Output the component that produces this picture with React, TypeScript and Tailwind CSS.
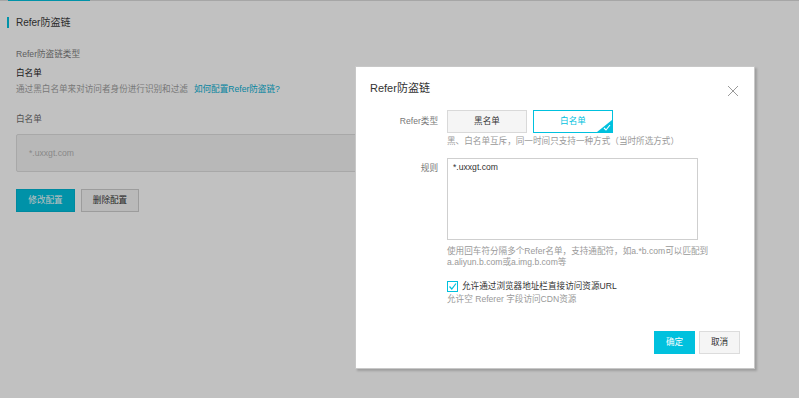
import React from "react";

const font = { fontFamily: '"Liberation Sans", "Noto Sans CJK SC", sans-serif' };

export default function App() {
  return (
    <div
      className="relative w-[799px] h-[398px] overflow-hidden bg-white"
      style={font}
    >
      {/* page */}
      <div className="h-px bg-[#dcdcdc]">
        <div className="ml-[8px] w-[82px] h-px bg-[#00c1de]" />
      </div>
      <div className="mt-[16px] flex items-center h-[11px]">
        <div className="ml-[7px] w-[2px] h-[11px] bg-[#00c1de]" />
        <span className="ml-[7px] text-[10px] leading-[11px] text-[#3a3a3a]">Refer防盗链</span>
      </div>
      <div className="pl-[16px]">
        <div className="mt-[20px] text-[8.6px] leading-[12px] text-[#7c7c7c]">Refer防盗链类型</div>
        <div className="mt-[7px] text-[8.6px] leading-[12px] text-[#222]">白名单</div>
        <div className="mt-[4px] text-[8.6px] leading-[12px] text-[#a0a0a0]">
          通过黑白名单来对访问者身份进行识别和过滤
          <span className="ml-[6px] text-[#09b0d4]">如何配置Refer防盗链?</span>
        </div>
        <div className="mt-[18px] text-[8.6px] leading-[12px] text-[#6a6a6a]">白名单</div>
        <div className="mt-[9px] w-[560px] h-[38px] rounded-[2px] border border-[#dedede] bg-[#f3f3f3] flex items-center pl-[12px] text-[8.6px] text-[#b5b5b5]">
          *.uxxgt.com
        </div>
        <div className="mt-[17px] flex gap-[6px]">
          <div className="w-[59px] h-[23px] bg-[#00c1de] text-white text-[8.6px] flex items-center justify-center border border-[#00b5d2]">
            修改配置
          </div>
          <div className="w-[58px] h-[23px] bg-[#f5f5f5] text-[#333] text-[8.6px] flex items-center justify-center border border-[#cfcfcf]">
            删除配置
          </div>
        </div>
      </div>

      {/* overlay */}
      <div className="absolute inset-0 bg-black/[0.243]" />

      {/* modal */}
      <div className="absolute left-[355px] top-[66px] w-[400px] h-[303px] bg-white border border-[#c8c8c8] shadow-[2px_2px_2px_rgba(0,0,0,0.18)] flex flex-col">
        <div className="pl-[14px] pt-[14px] text-[11px] leading-[14px] text-[#333]">Refer防盗链</div>
        <svg
          className="absolute right-[15px] top-[18px]"
          width="12"
          height="12"
          viewBox="0 0 12 12"
        >
          <path d="M1 1 L11 11 M11 1 L1 11" stroke="#9a9a9a" strokeWidth="1" fill="none" />
        </svg>

        {/* row 1 */}
        <div className="mt-[15px] flex">
          <div className="w-[82px] h-[23px] flex items-center justify-end text-[8.6px] text-[#777]">Refer类型</div>
          <div className="ml-[9px] flex flex-col">
            <div className="flex gap-[6px]">
              <div className="w-[80px] h-[23px] bg-[#f5f5f5] border border-[#d9d9d9] flex items-center justify-center text-[8.6px] text-[#333]">
                黑名单
              </div>
              <div className="relative w-[80px] h-[23px] bg-white border border-[#00c1de] flex items-center justify-center text-[8.6px] text-[#00c1de]">
                白名单
                <svg className="absolute right-0 bottom-0" width="15" height="12" viewBox="0 0 15 12">
                  <polygon points="15,0 15,12 0,12" fill="#00c1de" />
                  <path d="M7 8 L9 10 L13 5" stroke="#fff" strokeWidth="1.1" fill="none" />
                </svg>
              </div>
            </div>
            <div className="mt-[2px] text-[8.6px] leading-[12px] text-[#999]">
              黑、白名单互斥，同一时间只支持一种方式（当时所选方式）
            </div>
          </div>
        </div>

        {/* row 2 */}
        <div className="mt-[11px] flex">
          <div className="w-[82px] pt-[4px] text-right text-[8.6px] leading-[12px] text-[#777]">规则</div>
          <div className="ml-[9px] flex flex-col">
            <div className="w-[251px] h-[82px] border border-[#cfcfcf] pl-[5px] pt-[2px] text-[8.6px] leading-[12px] text-[#333]">
              *.uxxgt.com
            </div>
            <div className="mt-[6px] text-[8.6px] leading-[11px] text-[#999]">
              使用回车符分隔多个Refer名单，支持通配符，如a.*b.com可以匹配到
              <br />
              a.aliyun.b.com或a.img.b.com等
            </div>
            <div className="mt-[12px] flex items-center">
              <div className="w-[11px] h-[11px] border border-[#00c1de] flex items-center justify-center">
                <svg width="9" height="9" viewBox="0 0 9 9">
                  <path d="M1.5 4.5 L3.8 7 L8 1.5" stroke="#00c1de" strokeWidth="1.2" fill="none" />
                </svg>
              </div>
              <span className="ml-[4px] text-[8.6px] leading-[12px] text-[#333]">允许通过浏览器地址栏直接访问资源URL</span>
            </div>
            <div className="mt-[1px] text-[8.6px] leading-[12px] text-[#999]">允许空 Referer 字段访问CDN资源</div>
          </div>
        </div>

        {/* footer */}
        <div className="mt-auto pb-[14px] pr-[14px] flex justify-end gap-[4px]">
          <div className="w-[41px] h-[23px] bg-[#00c1de] text-white text-[8.6px] flex items-center justify-center">确定</div>
          <div className="w-[41px] h-[23px] bg-[#f5f5f5] border border-[#dcdcdc] text-[#333] text-[8.6px] flex items-center justify-center">取消</div>
        </div>
      </div>
    </div>
  );
}
